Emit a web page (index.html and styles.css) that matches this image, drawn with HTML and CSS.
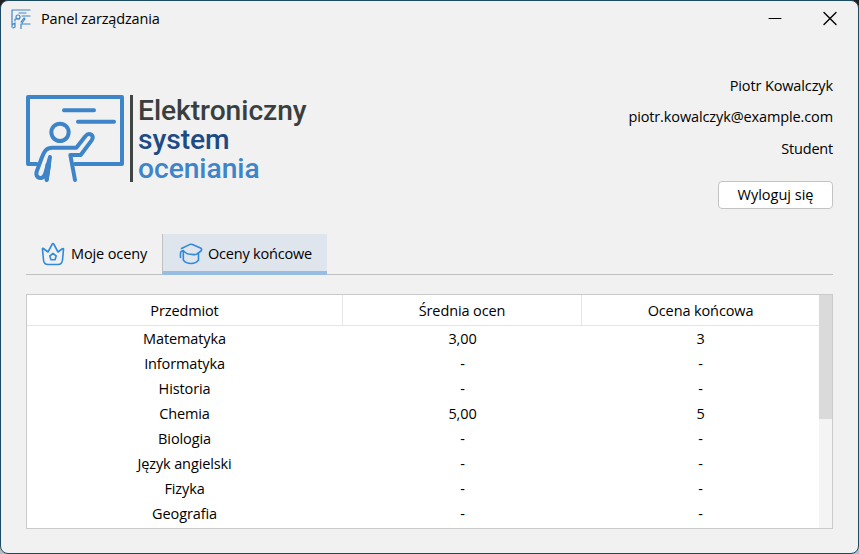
FILE: index.html
```html
<!DOCTYPE html>
<html lang="pl">
<head>
<meta charset="utf-8">
<title>Panel zarządzania</title>
<link rel="stylesheet" href="styles.css">
</head>
<body>
<div class="window">
  <header class="titlebar">
    <svg class="app-icon" viewBox="0 0 20 20"><path d="M19 1H1v14h2M8 4h7M11 7h8M11 15h8M10 15v5M1 18v-2l3-2v4l-2 1M4 12v-2h4M10 13l3-4 1 1-3 4"/><circle cx="7" cy="8" r="2"/></svg>
    <span class="caption">Panel zarządzania</span>
    <svg class="controls" viewBox="0 0 90 20"><path class="minimize" d="M9 9.5h12"/><path d="M64 3.500l12 12M76 3.500L64 15.500"/></svg>
  </header>
  <section class="top">
    <div class="brand">
      <svg class="logo" viewBox="33 30 294 264">
        <path d="M65 237H39V36H321V237H180"/>
        <path d="M147 76H237M189 110H297"/>
        <circle cx="135" cy="142" r="26"/>
        <path d="M95 285L105 216L90 268C85 281 75 281 68 276C63 272 63 267 65 260L80 219C87 199 94 188 112 188H184L211 154C217 146 223 145 230 150C235 155 234 160 230 166L197 210H166L180 285"/>
        <path d="M97 240L95 284L102 240"/>
      </svg>
      <span class="divider"></span>
      <div class="words"><span class="w1">Elektroniczny</span><span class="w2">system</span><span class="w3">oceniania</span></div>
    </div>
    <div class="user">
      <span class="name">Piotr Kowalczyk</span>
      <span class="mail">piotr.kowalczyk@example.com</span>
      <span class="role">Student</span>
      <button class="logout">Wyloguj się</button>
    </div>
  </section>
  <nav class="tabs">
    <div class="tab first">
      <svg viewBox="0 0 24 24"><path d="M1.500 7.500C1 6 2.400 6 3 7L7 10L11 2.500Q12 .5 13 2.500L17 10L21 7Q22.800 5.700 22.500 7.500L21.500 18Q21 22.500 17 22.500H7Q3 22.500 2.500 18ZM12 11.500l3.200 2.400-1.200 3.800h-4l-1.200-3.800z"/></svg>
      <span>Moje oceny</span>
    </div>
    <div class="tab active">
      <svg viewBox="0 0 24 24"><path d="M2.500 6.500L10.500 2.600Q12 2 13.500 2.600L21.500 6Q23.500 7.200 22 9L18 12Q17 12.800 15 12.600L9.500 12Q8 11.800 7 11L4 8.700M4.300 9V18Q7 21.500 12 21.500T19.500 18V11.500M4.500 8.500L2 9.500Q1.200 11 1.500 15.500"/></svg>
      <span>Oceny końcowe</span>
    </div>
  </nav>
  <div class="panel">
    <div class="grid">
      <div class="row head"><span>Przedmiot</span><span>Średnia ocen</span><span>Ocena końcowa</span></div>
      <div class="row"><span>Matematyka</span><span>3,00</span><span>3</span></div>
      <div class="row"><span>Informatyka</span><span>-</span><span>-</span></div>
      <div class="row"><span>Historia</span><span>-</span><span>-</span></div>
      <div class="row"><span>Chemia</span><span>5,00</span><span>5</span></div>
      <div class="row"><span>Biologia</span><span>-</span><span>-</span></div>
      <div class="row"><span>Język angielski</span><span>-</span><span>-</span></div>
      <div class="row"><span>Fizyka</span><span>-</span><span>-</span></div>
      <div class="row"><span>Geografia</span><span>-</span><span>-</span></div>
    </div>
    <div class="scrollbar"><div class="thumb"></div></div>
  </div>
</div>
</body>
</html>
```
FILE: styles.css
```css
* { box-sizing: border-box; }
body { margin: 0; background: linear-gradient(#202020 50%, #b8bcc0 50%); font: 14.5px/20px "Open Sans", "Noto Sans", sans-serif; letter-spacing: -0.12px; color: #000; overflow: hidden; }
svg { fill: none; stroke-linecap: round; stroke-linejoin: round; display: block; }
.window { width: 859px; height: 554px; border: 1px solid #1b4a63; border-radius: 8px; background: #f1f1f1; padding: 0 25px; }
.titlebar { height: 36px; display: flex; align-items: center; margin-left: -15px; }
.app-icon { width: 20px; height: 20px; margin-right: 10px; stroke: #3f85c8; stroke-width: 1.2; }
.caption { flex: 1; letter-spacing: -0.15px; }
.controls { width: 90px; height: 20px; margin-right: -17px; margin-top: -1px; stroke: #000; stroke-width: 1.4; }
.minimize { stroke-width: 1; }
.top { height: 197px; display: flex; justify-content: space-between; }
.brand { display: flex; padding-top: 58px; }
.logo { width: 98px; height: 88px; stroke: #3d84c8; stroke-width: 12; }
.divider { width: 3px; height: 87px; background: #414543; margin: 0 5px 0 6px; }
.words { display: flex; flex-direction: column; font: 500 28.2px/29px Roboto, sans-serif; letter-spacing: -0.04px; padding-top: 1px; }
.w1 { color: #3a3f3e; }
.w2 { color: #1c4b86; }
.w3 { color: #3d84c8; }
.user { display: flex; flex-direction: column; align-items: flex-end; padding-top: 39px; }
.user span { height: 31px; line-height: 20px; }
.user .mail { height: 32px; }
.user .role { height: 33px; letter-spacing: -0.2px; }
.logout { width: 115px; height: 28px; flex: none; background: #fff; border: 1px solid #c3c3c3; border-radius: 4px; padding: 0; font: inherit; letter-spacing: 0; color: inherit; margin-top: 9px; }
.tabs { height: 41px; display: flex; border-bottom: 1px solid #c0c0c0; }
.tab { height: 40px; display: flex; align-items: center; gap: 6px; }
.tab svg { width: 24px; height: 24px; stroke: #3289dc; stroke-width: 1.6; }
.first { width: 136px; padding-left: 15px; }
.active { width: 165px; height: 41px; margin-bottom: -1px; padding: 3px 0 0 16px; background: #dee5ec; border-left: 1px solid #c0c0c0; border-bottom: 4px solid #98bde2; gap: 5px; letter-spacing: -0.2px; }
.panel { height: 235px; margin-top: 19px; border: 1px solid #cacaca; background: #fff; display: flex; }
.grid { flex: 1; }
.row { height: 25px; line-height: 25px; display: grid; grid-template-columns: 316px 239px 1fr; text-align: center; }
.row:not(.head) span:first-child { padding-right: 1px; }
.head { height: 31px; line-height: 31px; border-bottom: 1px solid #e5e5e5; letter-spacing: -0.12px; }
.head span:not(:last-child) { border-right: 1px solid #e5e5e5; }
.scrollbar { width: 13px; background: #f4f4f4; }
.thumb { height: 124px; background: #dadada; }
```
